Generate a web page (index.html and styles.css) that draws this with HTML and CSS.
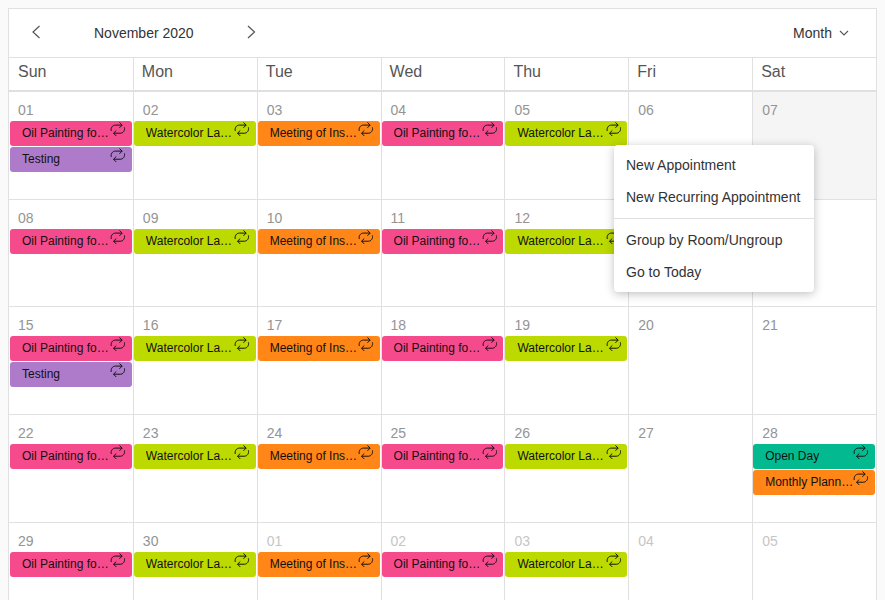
FILE: index.html
```html
<!DOCTYPE html>
<html lang="en">

<head>
    <meta charset="UTF-8">
    <meta name="viewport" content="width=device-width, initial-scale=1.0">
    <title>Scheduler</title>
    <link rel="stylesheet" href="styles.css">
</head>

<body>
    <svg class="defs" width="0" height="0">
        <symbol id="repeat" viewBox="0 0 16 16">
            <path d="M1.3 9C0.5 5.8 2.6 3 5.5 3H12.4M9.6 0.2L12.4 3L9.6 5.8M14.7 5.3C15.5 8.5 13.4 11.3 10.5 11.3H3.6M6.4 8.5L3.6 11.3L6.4 14.1" fill="none" stroke="currentColor" stroke-width="1" />
        </symbol>
    </svg>

    <div class="scheduler">
        <!-- Toolbar -->
        <div class="toolbar">
            <button class="nav-btn prev">
                <svg width="10" height="14" viewBox="0 0 10 14"><path d="M7.5 1L1 7L7.5 13" fill="none" stroke="#555" stroke-width="1.2" /></svg>
            </button>
            <span class="title">November 2020</span>
            <button class="nav-btn next">
                <svg width="10" height="14" viewBox="0 0 10 14"><path d="M1 1L7.5 7L1 13" fill="none" stroke="#555" stroke-width="1.2" /></svg>
            </button>
            <div class="view-switch">
                Month
                <svg width="10" height="6" viewBox="0 0 10 6"><path d="M1 1L5 5L9 1" fill="none" stroke="#555" stroke-width="1.1" /></svg>
            </div>
        </div>

        <!-- Week days -->
        <div class="days">
            <div class="day">Sun</div>
            <div class="day">Mon</div>
            <div class="day">Tue</div>
            <div class="day">Wed</div>
            <div class="day">Thu</div>
            <div class="day">Fri</div>
            <div class="day">Sat</div>
        </div>

        <!-- Month grid -->
        <div class="month">
            <div class="cell"><div class="date">01</div>
                <div class="event pink"><span class="name">Oil Painting for Beginners</span><svg class="icon"><use href="#repeat" /></svg></div>
                <div class="event purple"><span class="name">Testing</span><svg class="icon"><use href="#repeat" /></svg></div>
            </div>
            <div class="cell"><div class="date">02</div>
                <div class="event lime"><span class="name">Watercolor Landscape</span><svg class="icon"><use href="#repeat" /></svg></div>
            </div>
            <div class="cell"><div class="date">03</div>
                <div class="event orange"><span class="name">Meeting of Instructors</span><svg class="icon"><use href="#repeat" /></svg></div>
            </div>
            <div class="cell"><div class="date">04</div>
                <div class="event pink"><span class="name">Oil Painting for Beginners</span><svg class="icon"><use href="#repeat" /></svg></div>
            </div>
            <div class="cell"><div class="date">05</div>
                <div class="event lime"><span class="name">Watercolor Landscape</span><svg class="icon"><use href="#repeat" /></svg></div>
            </div>
            <div class="cell"><div class="date">06</div></div>
            <div class="cell selected"><div class="date">07</div></div>

            <div class="cell"><div class="date">08</div>
                <div class="event pink"><span class="name">Oil Painting for Beginners</span><svg class="icon"><use href="#repeat" /></svg></div>
            </div>
            <div class="cell"><div class="date">09</div>
                <div class="event lime"><span class="name">Watercolor Landscape</span><svg class="icon"><use href="#repeat" /></svg></div>
            </div>
            <div class="cell"><div class="date">10</div>
                <div class="event orange"><span class="name">Meeting of Instructors</span><svg class="icon"><use href="#repeat" /></svg></div>
            </div>
            <div class="cell"><div class="date">11</div>
                <div class="event pink"><span class="name">Oil Painting for Beginners</span><svg class="icon"><use href="#repeat" /></svg></div>
            </div>
            <div class="cell"><div class="date">12</div>
                <div class="event lime"><span class="name">Watercolor Landscape</span><svg class="icon"><use href="#repeat" /></svg></div>
            </div>
            <div class="cell"><div class="date">13</div></div>
            <div class="cell"><div class="date">14</div></div>

            <div class="cell"><div class="date">15</div>
                <div class="event pink"><span class="name">Oil Painting for Beginners</span><svg class="icon"><use href="#repeat" /></svg></div>
                <div class="event purple"><span class="name">Testing</span><svg class="icon"><use href="#repeat" /></svg></div>
            </div>
            <div class="cell"><div class="date">16</div>
                <div class="event lime"><span class="name">Watercolor Landscape</span><svg class="icon"><use href="#repeat" /></svg></div>
            </div>
            <div class="cell"><div class="date">17</div>
                <div class="event orange"><span class="name">Meeting of Instructors</span><svg class="icon"><use href="#repeat" /></svg></div>
            </div>
            <div class="cell"><div class="date">18</div>
                <div class="event pink"><span class="name">Oil Painting for Beginners</span><svg class="icon"><use href="#repeat" /></svg></div>
            </div>
            <div class="cell"><div class="date">19</div>
                <div class="event lime"><span class="name">Watercolor Landscape</span><svg class="icon"><use href="#repeat" /></svg></div>
            </div>
            <div class="cell"><div class="date">20</div></div>
            <div class="cell"><div class="date">21</div></div>

            <div class="cell"><div class="date">22</div>
                <div class="event pink"><span class="name">Oil Painting for Beginners</span><svg class="icon"><use href="#repeat" /></svg></div>
            </div>
            <div class="cell"><div class="date">23</div>
                <div class="event lime"><span class="name">Watercolor Landscape</span><svg class="icon"><use href="#repeat" /></svg></div>
            </div>
            <div class="cell"><div class="date">24</div>
                <div class="event orange"><span class="name">Meeting of Instructors</span><svg class="icon"><use href="#repeat" /></svg></div>
            </div>
            <div class="cell"><div class="date">25</div>
                <div class="event pink"><span class="name">Oil Painting for Beginners</span><svg class="icon"><use href="#repeat" /></svg></div>
            </div>
            <div class="cell"><div class="date">26</div>
                <div class="event lime"><span class="name">Watercolor Landscape</span><svg class="icon"><use href="#repeat" /></svg></div>
            </div>
            <div class="cell"><div class="date">27</div></div>
            <div class="cell"><div class="date">28</div>
                <div class="event teal"><span class="name">Open Day</span><svg class="icon"><use href="#repeat" /></svg></div>
                <div class="event orange"><span class="name">Monthly Planning</span><svg class="icon"><use href="#repeat" /></svg></div>
            </div>

            <div class="cell"><div class="date">29</div>
                <div class="event pink"><span class="name">Oil Painting for Beginners</span><svg class="icon"><use href="#repeat" /></svg></div>
            </div>
            <div class="cell"><div class="date">30</div>
                <div class="event lime"><span class="name">Watercolor Landscape</span><svg class="icon"><use href="#repeat" /></svg></div>
            </div>
            <div class="cell other"><div class="date">01</div>
                <div class="event orange"><span class="name">Meeting of Instructors</span><svg class="icon"><use href="#repeat" /></svg></div>
            </div>
            <div class="cell other"><div class="date">02</div>
                <div class="event pink"><span class="name">Oil Painting for Beginners</span><svg class="icon"><use href="#repeat" /></svg></div>
            </div>
            <div class="cell other"><div class="date">03</div>
                <div class="event lime"><span class="name">Watercolor Landscape</span><svg class="icon"><use href="#repeat" /></svg></div>
            </div>
            <div class="cell other"><div class="date">04</div></div>
            <div class="cell other"><div class="date">05</div></div>
        </div>

        <!-- Context menu -->
        <ul class="menu">
            <li>New Appointment</li>
            <li>New Recurring Appointment</li>
            <li class="separator"></li>
            <li>Group by Room/Ungroup</li>
            <li>Go to Today</li>
        </ul>
    </div>
</body>

</html>
```

FILE: styles.css
```css
html {
    overflow: hidden;
}

body {
    background-color: #fafafa;
    font-family: "Liberation Sans", Arial, sans-serif;
    color: #333;
}

.defs {
    position: absolute;
}

.scheduler {
    position: relative;
    border: 1px solid #e0e0e0;
    background-color: #fff;
}

.toolbar {
    display: flex;
    align-items: center;
    height: 48px;
    font-size: 14px;
    border-bottom: 1px solid #e0e0e0;
}

.nav-btn {
    display: flex;
    padding: 0;
    border: none;
    background: none;
}

.prev {
    margin-left: 23px;
    margin-top: -2px;
}

.title {
    margin-left: 52px;
}

.next {
    margin-left: 53px;
    margin-top: -2px;
}

.view-switch {
    display: flex;
    align-items: center;
    gap: 7px;
    margin-left: auto;
    margin-right: 27px;
}

.days,
.month {
    display: grid;
    grid-template-columns: repeat(7, 1fr);
}

.days {
    height: 34px;
    box-sizing: border-box;
    border-bottom: 2px solid #e0e0e0;
}

.day {
    padding: 5px 0 0 8px;
    font-size: 16px;
    line-height: 18px;
    color: #555;
    border-left: 1px solid #e0e0e0;
}

.day:first-child {
    padding-left: 9px;
    border-left: none;
}

.month {
    grid-auto-rows: 107.7px;
}

.cell {
    min-width: 0;
    border-left: 1px solid #e0e0e0;
    border-bottom: 1px solid #e0e0e0;
}

.cell:nth-child(7n + 1) {
    padding-left: 1px;
    border-left: none;
}

.cell:nth-child(7n + 1) .date {
    padding-left: 8px;
}

.selected {
    background-color: #f5f5f5;
}

.date {
    padding: 10px 0 0 9px;
    height: 19px;
    font-size: 14px;
    line-height: 16px;
    color: #949494;
}

.other .date {
    color: #c6c6c6;
}

.event {
    display: flex;
    height: 25px;
    margin: 0 1px 1px 0;
    padding-left: 12px;
    border-radius: 3px;
    font-size: 12px;
    line-height: 24px;
    color: #111;
}

.name {
    width: 90px;
    white-space: nowrap;
    overflow: hidden;
    text-overflow: ellipsis;
}

.icon {
    width: 16px;
    height: 16px;
    margin-top: 1px;
    margin-left: auto;
    margin-right: 6px;
    color: #111;
}

.pink {
    background-color: #f54b8c;
}

.lime {
    background-color: #bcd900;
}

.orange {
    background-color: #ff8617;
}

.purple {
    background-color: #ad7bca;
}

.teal {
    background-color: #03ba90;
}

.menu {
    position: absolute;
    left: 605px;
    top: 136px;
    width: 200px;
    margin: 0;
    padding: 4px 0;
    list-style: none;
    background-color: #fff;
    border-radius: 4px;
    box-shadow: 0 2px 10px rgba(0, 0, 0, 0.25);
    font-size: 14px;
}

.menu li {
    padding: 0 12px;
    line-height: 32px;
    white-space: nowrap;
}

.menu .separator {
    height: 1px;
    margin: 5px 0;
    padding: 0;
    background-color: #e0e0e0;
}
```
